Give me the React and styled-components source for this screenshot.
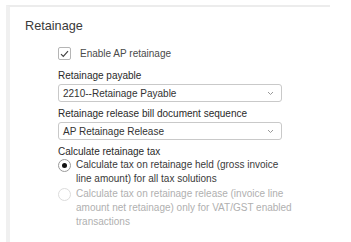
import React from 'react';
import styled, { createGlobalStyle } from 'styled-components';

const Global = createGlobalStyle`
  html, body { margin: 0; background: #fff; }
  body { font-family: "Liberation Sans", Arial, Helvetica, sans-serif; }
`;

const Page = styled.div`
  padding: 5px 0 0 6px;
  height: 237px;
`;

const Panel = styled.section`
  width: 324px;
  height: 237px;
  border-top: 2px solid #ececec;
  border-left: 4px solid #f0f0f0;
  box-sizing: border-box;
  padding: 11px 0 0 15px;
`;

const Title = styled.h3`
  margin: 0;
  font-size: 12.7px;
  line-height: 16px;
  font-weight: normal;
  color: #3a3a3a;
`;

const Body = styled.div`
  padding: 13px 0 0 33px;
  display: flex;
  flex-direction: column;
`;

const CheckRow = styled.label`
  display: flex;
  align-items: center;
  gap: 9px;
  height: 13px;
  font-size: 10px;
  color: #4a4a4a;
  margin-bottom: 9px;
`;

const Box = styled.span`
  width: 11px;
  height: 11px;
  border: 1px solid #b5b5b5;
  border-radius: 2px;
  display: flex;
  align-items: center;
  justify-content: center;
`;

const Field = styled.div`
  margin-bottom: 5px;
`;

const Label = styled.div`
  font-size: 10px;
  line-height: 14px;
  color: #2a2a2a;
  margin-bottom: ${p => (p.$tight ? '0' : '1px')};
`;

const Select = styled.div`
  width: 224px;
  height: 18px;
  box-sizing: border-box;
  border: 1px solid #c9c9c9;
  border-radius: 3px;
  display: flex;
  align-items: center;
  justify-content: space-between;
  padding: 0 7px 0 4px;
  font-size: 10px;
  color: #333;
`;

const Radio = styled.div`
  display: flex;
  align-items: flex-start;
  gap: 5px;
  margin-top: 1px;
  font-size: 10px;
  line-height: 14px;
  white-space: nowrap;
  color: ${p => (p.disabled ? '#b0b0b0' : '#3a3a3a')};
  &:first-of-type { margin-top: -1px; }
`;

const Dot = styled.span`
  flex: none;
  width: 11px;
  height: 11px;
  margin-top: 1px;
  border: 1px solid ${p => (p.disabled ? '#dcdcdc' : '#9a9a9a')};
  border-radius: 50%;
  display: flex;
  align-items: center;
  justify-content: center;
  &::after {
    content: '';
    width: 5px;
    height: 5px;
    border-radius: 50%;
    background: ${p => (p.checked ? '#111' : 'transparent')};
  }
`;

const Chevron = () => (
  <svg width="7" height="5" viewBox="0 0 7 5">
    <path d="M1 1l2.5 2.5L6 1" fill="none" stroke="#999" strokeWidth="1" />
  </svg>
);

export default function App() {
  return (
    <Page>
      <Global />
      <Panel>
        <Title>Retainage</Title>
        <Body>
          <CheckRow>
            <Box>
              <svg width="9" height="8" viewBox="0 0 9 8">
                <path d="M1 4.2l2.3 2.3L8 1.2" fill="none" stroke="#444" strokeWidth="1.2" />
              </svg>
            </Box>
            Enable AP retainage
          </CheckRow>
          <Field>
            <Label>Retainage payable</Label>
            <Select>2210--Retainage Payable<Chevron /></Select>
          </Field>
          <Field>
            <Label>Retainage release bill document sequence</Label>
            <Select>AP Retainage Release<Chevron /></Select>
          </Field>
          <Label $tight>Calculate retainage tax</Label>
          <div>
            <Radio>
              <Dot checked />
              <span>Calculate tax on retainage held (gross invoice<br />line amount) for all tax solutions</span>
            </Radio>
            <Radio disabled>
              <Dot disabled />
              <span>Calculate tax on retainage release (invoice line<br />amount net retainage) only for VAT/GST enabled<br />transactions</span>
            </Radio>
          </div>
        </Body>
      </Panel>
    </Page>
  );
}
